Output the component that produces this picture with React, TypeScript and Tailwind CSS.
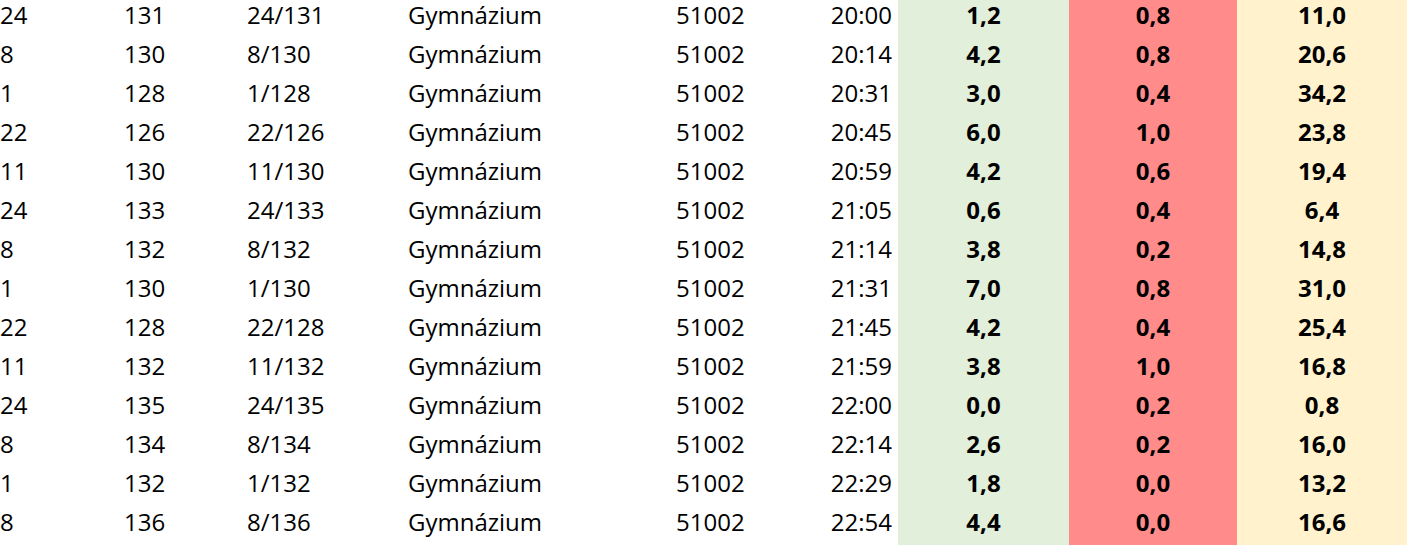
import React from "react";

const rows: string[][] = [
  ["24", "131", "24/131", "20:00", "1,2", "0,8", "11,0"],
  ["8", "130", "8/130", "20:14", "4,2", "0,8", "20,6"],
  ["1", "128", "1/128", "20:31", "3,0", "0,4", "34,2"],
  ["22", "126", "22/126", "20:45", "6,0", "1,0", "23,8"],
  ["11", "130", "11/130", "20:59", "4,2", "0,6", "19,4"],
  ["24", "133", "24/133", "21:05", "0,6", "0,4", "6,4"],
  ["8", "132", "8/132", "21:14", "3,8", "0,2", "14,8"],
  ["1", "130", "1/130", "21:31", "7,0", "0,8", "31,0"],
  ["22", "128", "22/128", "21:45", "4,2", "0,4", "25,4"],
  ["11", "132", "11/132", "21:59", "3,8", "1,0", "16,8"],
  ["24", "135", "24/135", "22:00", "0,0", "0,2", "0,8"],
  ["8", "134", "8/134", "22:14", "2,6", "0,2", "16,0"],
  ["1", "132", "1/132", "22:29", "1,8", "0,0", "13,2"],
  ["8", "136", "8/136", "22:54", "4,4", "0,0", "16,6"],
];

export default function App() {
  return (
    <div
      className="h-[545px] w-[1407px] overflow-hidden bg-white text-black text-[24px] leading-[30px]"
      style={{ fontFamily: '"Open Sans", "Liberation Sans", sans-serif' }}
    >
      {rows.map((r, i) => (
        <div
          key={i}
          className="grid h-[39px] grid-cols-[124px_123px_161px_268px_124px_98px_171px_168px_170px]"
        >
          <div>{r[0]}</div>
          <div>{r[1]}</div>
          <div>{r[2]}</div>
          <div>Gymnázium</div>
          <div>51002</div>
          <div className="pr-[6px] text-right">{r[3]}</div>
          <div className="bg-[#e2efda] text-center font-bold">{r[4]}</div>
          <div className="bg-[#ff8b8b] text-center font-bold">{r[5]}</div>
          <div className="bg-[#fff2cc] text-center font-bold">{r[6]}</div>
        </div>
      ))}
    </div>
  );
}
